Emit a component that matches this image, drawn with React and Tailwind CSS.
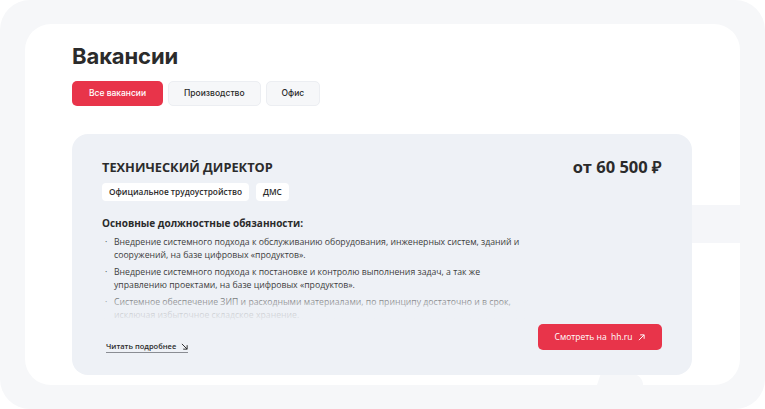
import React, { useState } from 'react';

const tabs = ['Все вакансии', 'Производство', 'Офис'];

const duties = [
  'Внедрение системного подхода к обслуживанию оборудования, инженерных систем, зданий и сооружений, на базе цифровых «продуктов».',
  'Внедрение системного подхода к постановке и контролю выполнения задач, а так же управлению проектами, на базе цифровых «продуктов».',
  'Системное обеспечение ЗИП и расходными материалами, по принципу достаточно и в срок, исключая избыточное складское хранение.',
];

function ArrowDown() {
  return (
    <svg width="7" height="7" viewBox="0 0 8 8" fill="none" stroke="currentColor" strokeWidth="1.1">
      <path d="M1 1l6 6M7 2.5V7H2.5" />
    </svg>
  );
}

function ArrowUp() {
  return (
    <svg width="7" height="7" viewBox="0 0 8 8" fill="none" stroke="currentColor" strokeWidth="1.1">
      <path d="M1 7l6-6M2.5 1H7v4.5" />
    </svg>
  );
}

export default function App() {
  const [active, setActive] = useState(0);
  return (
    <div className="w-[765px] h-[409px] bg-white overflow-hidden" style={{ fontFamily: '"Open Sans", sans-serif' }}>
      <div className="relative w-full h-full bg-[#f6f7f9] rounded-[30px] pt-[24px] pl-[25px] pr-[25px]">
        <div className="relative bg-white rounded-[26px] h-[361px] pl-[47px] pr-[48px] pt-[20px]">
          {/* strip showing through on the right edge */}
          <div className="absolute right-0 top-[181px] w-[48px] h-[38px] bg-[#f5f6f9]" />
          <div className="absolute left-[572px] bottom-0 w-[46px] h-[11px] bg-[#f6f7f9] rounded-tr-[14px] [clip-path:polygon(8%_0,100%_0,100%_100%,0_100%)]" />

          <h1 className="text-[22px] font-bold text-[#2b2b2b] leading-[24px] tracking-[-0.1px]" style={{ fontFamily: 'Inter, sans-serif' }}>Вакансии</h1>

          <div className="flex gap-[5px] mt-[13px]" style={{ fontFamily: 'Inter, sans-serif' }}>
            {tabs.map((t, i) => (
              <button
                key={t}
                onClick={() => setActive(i)}
                className={
                  i === active
                    ? 'h-[25px] px-[16px] w-[91px] rounded-[5px] bg-[#e8344a] text-white text-[8.5px] font-medium'
                    : 'h-[25px] px-[15px] rounded-[5px] bg-[#f6f7f9] border border-[#eceef2] text-[#2b2b2b] text-[8.5px] font-medium'
                }
              >
                {t}
              </button>
            ))}
          </div>

          <div className="relative z-10 mt-[28px] bg-[#eef1f6] rounded-[16px] h-[241px] px-[30px] pt-[24px] flex">
            <div className="flex-1 flex flex-col">
              <div className="text-[12.8px] font-bold text-[#2b2b2b] leading-[18px]">ТЕХНИЧЕСКИЙ ДИРЕКТОР</div>
              <div className="flex gap-[7px] mt-[7px]">
                <span className="bg-white rounded-[4px] h-[18px] px-[7px] flex items-center text-[8.3px] font-semibold text-[#2b2b2b]">Официальное трудоустройство</span>
                <span className="bg-white rounded-[4px] h-[18px] px-[7px] flex items-center text-[8.3px] font-semibold text-[#2b2b2b]">ДМС</span>
              </div>
              <div className="mt-[16px] text-[10px] font-bold text-[#2b2b2b] leading-[12px]">Основные должностные обязанности:</div>
              <div className="relative mt-[7px] h-[88px] overflow-hidden w-[424px]">
                <ul className="flex flex-col gap-[4px]">
                  {duties.map((d) => (
                    <li key={d} className="flex text-[8.7px] leading-[13px] text-[#3d3d3d]">
                      <span className="w-[12px] pl-[3px] shrink-0">·</span>
                      <span>{d}</span>
                    </li>
                  ))}
                </ul>
                <div className="absolute left-0 right-0 bottom-0 h-[34px] bg-gradient-to-b from-[#eef1f6]/0 via-[#eef1f6]/70 to-[#eef1f6]" />
              </div>
              <a href="#" className="mt-[17px] ml-[4px] self-start flex items-center gap-[5px] text-[7.5px] font-semibold text-[#2b2b2b] border-b border-[#8a8d93] pb-[1px] leading-[10px]">
                Читать подробнее <ArrowDown />
              </a>
            </div>
            <div className="flex flex-col items-end justify-between pb-[25px]">
              <div className="text-[16.5px] font-bold text-[#2b2b2b] leading-[20px] -mt-[1px]">от 60 500 ₽</div>
              <button className="h-[26px] w-[124px] rounded-[5px] bg-[#e8344a] text-white text-[8.5px] font-medium flex items-center justify-center gap-[6px]">
                <span>Смотреть на&nbsp; hh.ru</span> <ArrowUp />
              </button>
            </div>
          </div>
        </div>
      </div>
    </div>
  );
}
